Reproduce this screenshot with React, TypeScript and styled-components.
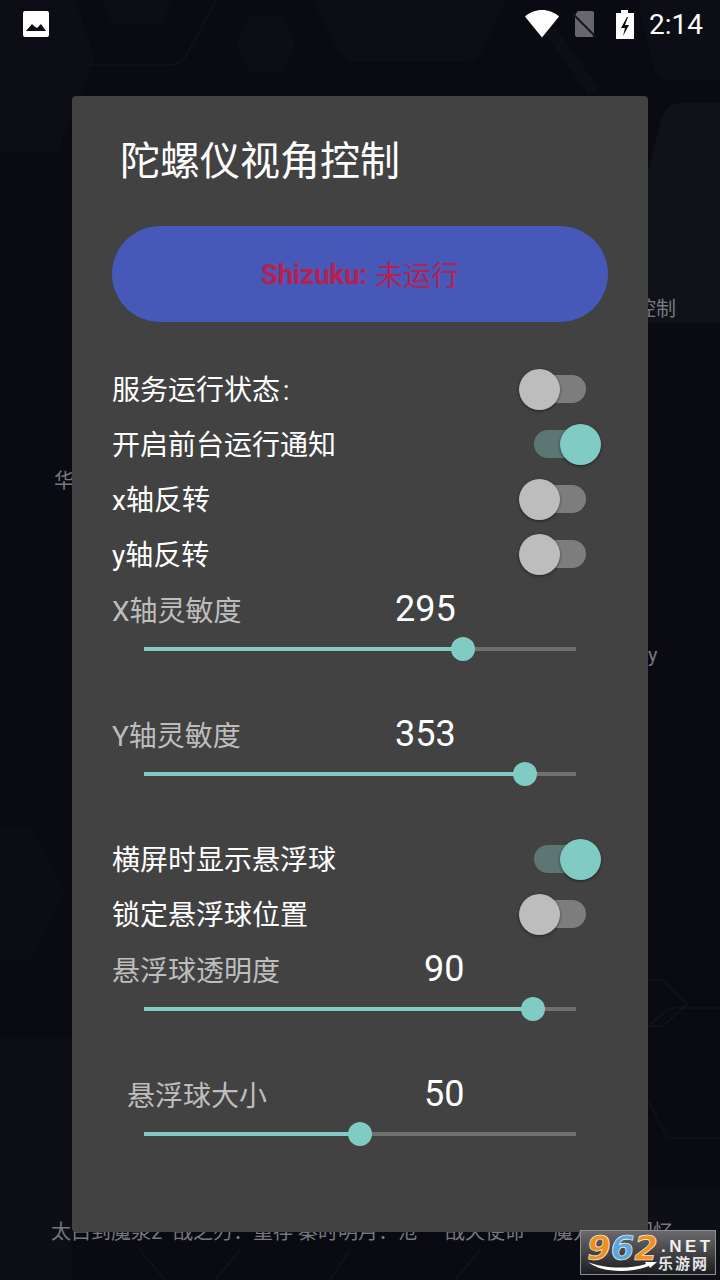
import React from 'react'
import styled, { createGlobalStyle } from 'styled-components'

const FONT = `Roboto, "Noto Sans CJK SC", sans-serif`

const GlobalStyle = createGlobalStyle`
  html, body {
    margin: 0;
    padding: 0;
    background: #0a0b12;
  }
  * {
    box-sizing: border-box;
  }
`

const Page = styled.div`
  position: relative;
  width: 720px;
  height: 1280px;
  overflow: hidden;
  background: #0a0b12;
  font-family: ${FONT};
`

const Backdrop = styled.svg`
  position: absolute;
  inset: 0;
`

const BehindText = styled.span<{ $x: number; $y: number; $size?: number }>`
  position: absolute;
  left: ${({ $x }) => $x}px;
  top: ${({ $y }) => $y}px;
  font-size: ${({ $size }) => $size ?? 20}px;
  line-height: 24px;
  color: #77787c;
  white-space: pre;
`

const Foreground = styled.div`
  position: relative;
  display: flex;
  flex-direction: column;
  height: 100%;
`

const StatusBar = styled.div`
  display: flex;
  align-items: center;
  height: 48px;
  padding: 0 17px 0 23px;
`

const StatusRight = styled.div`
  display: flex;
  align-items: center;
  margin-left: auto;
`

const SimIcon = styled.svg`
  margin-left: 13px;
`

const BatteryIcon = styled.svg`
  margin-left: 17px;
`

const Clock = styled.span`
  margin-left: 14px;
  font-size: 28px;
  color: #fff;
`

const Dialog = styled.div`
  display: flex;
  flex-direction: column;
  width: 576px;
  height: 1136px;
  margin: 48px 0 0 72px;
  padding: 0 40px;
  border-radius: 4px;
  background: #424242;
`

const Title = styled.h1`
  margin: 0 0 0 8px;
  padding-top: 42px;
  height: 130px;
  font-size: 40px;
  font-weight: 400;
  line-height: 48px;
  color: #fff;
`

const ServiceButton = styled.div`
  display: flex;
  align-items: center;
  justify-content: center;
  gap: 8px;
  height: 96px;
  margin-bottom: 40px;
  border-radius: 48px;
  background: #4658b8;
  font-size: 28px;
  color: #b7214f;
`

const ServiceName = styled.span`
  font-weight: 700;
  letter-spacing: -0.3px;
`

const Row = styled.div`
  display: flex;
  align-items: center;
  justify-content: space-between;
  height: 55px;
  font-size: 28px;
  color: #fff;
`

const RowLabel = styled.span`
  padding-bottom: 3px;
`

const SwitchBox = styled.div`
  position: relative;
  width: 82px;
  height: 41px;
  margin-right: 7px;
`

const SwitchTrack = styled.div<{ $on: boolean }>`
  position: absolute;
  left: 15px;
  top: 6px;
  width: 52px;
  height: 28px;
  border-radius: 14px;
  background: ${({ $on }) => ($on ? '#5b7673' : '#7d7d7d')};
`

const SwitchThumb = styled.div<{ $on: boolean }>`
  position: absolute;
  left: ${({ $on }) => ($on ? 41 : 0)}px;
  top: 0;
  width: 41px;
  height: 41px;
  border-radius: 50%;
  background: ${({ $on }) => ($on ? '#80cbc4' : '#bdbdbd')};
  box-shadow: 0 1px 3px rgba(0, 0, 0, 0.5);
`

const SliderGroup = styled.div`
  height: 125px;
`

const SliderHeader = styled.div`
  display: flex;
  align-items: center;
  height: 54px;
`

const SliderLabel = styled.span<{ $width: number; $indent?: number }>`
  width: ${({ $width }) => $width}px;
  padding-left: ${({ $indent }) => $indent ?? 0}px;
  font-size: 28px;
  color: #bdbdbd;
`

const SliderValue = styled.span`
  font-size: 36px;
  color: #fff;
`

const SliderTrack = styled.div`
  position: relative;
  width: 432px;
  height: 26px;
  margin-left: 32px;
  &::before {
    content: '';
    position: absolute;
    left: 0;
    right: 0;
    top: 11px;
    height: 4px;
    background: #707070;
  }
`

const SliderFill = styled.div`
  position: absolute;
  left: 0;
  top: 11px;
  height: 4px;
  background: #80cbc4;
`

const SliderThumb = styled.div`
  position: absolute;
  top: 1px;
  width: 24px;
  height: 24px;
  margin-left: -12px;
  border-radius: 50%;
  background: #80cbc4;
`

const Watermark = styled.div`
  position: absolute;
  left: 580px;
  top: 1230px;
  width: 136px;
  height: 45px;
  border: 1px solid #8f8f8f;
  background: linear-gradient(#6a6a6c, #48484b 45%, #1c1d22);
`

const BrandDigits = styled.span`
  position: absolute;
  left: 6px;
  top: -2px;
  font-family: "DejaVu Sans", sans-serif;
  font-size: 34px;
  font-weight: 700;
  font-style: italic;
  line-height: 38px;
  color: #ee9120;
  -webkit-text-stroke: 0.6px #fff;
`

const BrandBlue = styled.span`
  color: #5aa7dc;
`

const BrandNet = styled.span`
  position: absolute;
  left: 80px;
  top: 6px;
  font-family: "Liberation Sans", sans-serif;
  font-size: 17px;
  font-weight: 700;
  line-height: 20px;
  letter-spacing: 3.500px;
  color: #f0f0f0;
`

const BrandCn = styled.span`
  position: absolute;
  left: 77px;
  top: 24px;
  font-size: 15px;
  font-weight: 700;
  line-height: 18px;
  letter-spacing: 2px;
  color: #e4e4e4;
`

const Swoosh = styled.svg`
  position: absolute;
  left: 7px;
  top: 31px;
`

const Toggle: React.FC<{ label: string; on?: boolean }> = ({ label, on = false }) => (
  <Row>
    <RowLabel>{label}</RowLabel>
    <SwitchBox>
      <SwitchTrack $on={on} />
      <SwitchThumb $on={on} />
    </SwitchBox>
  </Row>
)

interface SliderProps {
  label: string
  value: number
  max: number
  labelWidth: number
  indent?: number
}

const Slider: React.FC<SliderProps> = ({ label, value, max, labelWidth, indent }) => {
  const percent = `${(value / max) * 100}%`
  return (
    <SliderGroup>
      <SliderHeader>
        <SliderLabel $width={labelWidth} $indent={indent}>
          {label}
        </SliderLabel>
        <SliderValue>{value}</SliderValue>
      </SliderHeader>
      <SliderTrack>
        <SliderFill style={{ width: percent }} />
        <SliderThumb style={{ left: percent }} />
      </SliderTrack>
    </SliderGroup>
  )
}

const App: React.FC = () => (
  <Page>
    <GlobalStyle />
    <Backdrop width="720" height="1280" viewBox="0 0 720 1280">
      <path d="M0 0h75l20 60-38 93H0z" fill="#0d0e15" />
      <path d="M103 0h69l-10 24h-50z" fill="#0d0e15" />
      <path d="M250 15h32l14 28-14 29h-32l-14-29z" fill="#0d0e15" />
      <path d="M312 0h193l-22 52-12 10H350l-12-10z" fill="#0d0e15" />
      <path d="M638 0h82v80h-56l-10-10z" fill="#0d0e15" />
      <path d="M216 0l-28 53q-6 12-18 12H87" fill="none" stroke="#12131a" strokeWidth="1.500" />
      <path d="M550 30l44 62" fill="none" stroke="#0e0f16" strokeWidth="12" />
      <path d="M682 103h38v220h-72v-150l14-56q4-14 20-14z" fill="#10121a" />
      <path d="M0 827h30l36 66-36 67H0z" fill="#0c0d14" />
      <path d="M0 1039h72v241H0z" fill="#0d0e16" />
      <path d="M648 1188h72v92h-72z" fill="#0d0e16" />
      <path d="M648 980h14l25 24-24 22h-15M648 1026l22-18h50" fill="none" stroke="#13141b" strokeWidth="1.500" />
      <path d="M648 1100l20 38h52" fill="none" stroke="#11121a" strokeWidth="1.500" />
      <path d="M140 1250l25 30M240 1250l-25 30M350 1250l-20 30M480 1250l-25 30" fill="none" stroke="#13141b" strokeWidth="1.500" />
    </Backdrop>
    <BehindText $x={54} $y={469}>华</BehindText>
    <BehindText $x={636} $y={297}>控制</BehindText>
    <BehindText $x={648} $y={643}>y</BehindText>
    <BehindText $x={51} $y={1220}>太白到魔泉2</BehindText>
    <BehindText $x={173} $y={1220}>战之刃：重存</BehindText>
    <BehindText $x={298} $y={1220}>秦时明月：沧</BehindText>
    <BehindText $x={445} $y={1220}>战天使命</BehindText>
    <BehindText $x={553} $y={1220}>魔方世界回忆</BehindText>
    <Foreground>
      <StatusBar>
        <svg width="26" height="26" viewBox="0 0 26 26">
          <path
            fill="#fff"
            fillRule="evenodd"
            d="M2 0h22a2 2 0 0 1 2 2v22a2 2 0 0 1-2 2H2a2 2 0 0 1-2-2V2a2 2 0 0 1 2-2zM3 20h20l-5-7-4 4-3-2-2-2z"
          />
        </svg>
        <StatusRight>
          <svg width="34" height="28" viewBox="0 0 34 28">
            <path fill="#fff" d="M17 27.500 0 6.500C4.500 2.500 10.500 0 17 0s12.500 2.500 17 6.500z" />
          </svg>
          <SimIcon width="26" height="28" viewBox="0 0 26 28">
            <path fill="#66666c" d="M6 1h14a2 2 0 0 1 2 2v22a2 2 0 0 1-2 2H5a2 2 0 0 1-2-2V5z" />
            <path stroke="#15161c" strokeWidth="2" d="M0 3l25 25" />
          </SimIcon>
          <BatteryIcon width="20" height="29" viewBox="0 0 20 29">
            <path
              fill="#fff"
              fillRule="evenodd"
              d="M6 0h7v3h6v26H1V3h5zM12 7l-6 11h4l-2 8 6-11h-4l3-8z"
            />
          </BatteryIcon>
          <Clock>2:14</Clock>
        </StatusRight>
      </StatusBar>
      <Dialog>
        <Title>陀螺仪视角控制</Title>
        <ServiceButton>
          <ServiceName>Shizuku:</ServiceName>
          <span>未运行</span>
        </ServiceButton>
        <Toggle label={'服务运行状态\u200a:'} />
        <Toggle label="开启前台运行通知" on />
        <Toggle label="x轴反转" />
        <Toggle label="y轴反转" />
        <Slider label="X轴灵敏度" value={295} max={400} labelWidth={283} />
        <Slider label="Y轴灵敏度" value={353} max={400} labelWidth={283} />
        <Toggle label="横屏时显示悬浮球" on />
        <Toggle label="锁定悬浮球位置" />
        <Slider label="悬浮球透明度" value={90} max={100} labelWidth={312} />
        <Slider label="悬浮球大小" value={50} max={100} labelWidth={312} indent={15} />
      </Dialog>
    </Foreground>
    <Watermark>
      <BrandDigits>
        9<BrandBlue>6</BrandBlue>2
      </BrandDigits>
      <BrandNet>.NET</BrandNet>
      <BrandCn>乐游网</BrandCn>
      <Swoosh width="70" height="10" viewBox="0 0 70 10">
        <path fill="#fff" d="M0 0c14 6 38 8 58 2l-1-2 12 0-7 6-1-2C40 12 12 10 0 0z" />
      </Swoosh>
    </Watermark>
  </Page>
)

export default App
